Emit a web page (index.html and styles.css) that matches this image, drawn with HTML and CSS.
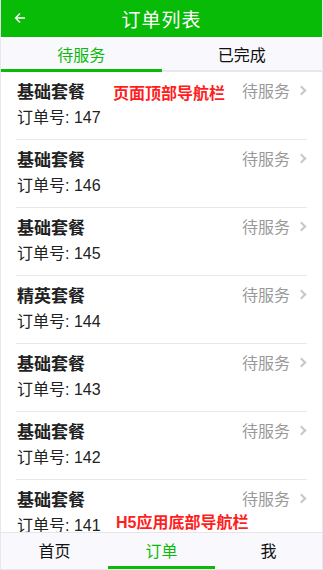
FILE: index.html
```html
<!DOCTYPE html>
<html lang="zh">
<head>
<meta charset="utf-8">
<title>订单列表</title>
<link rel="stylesheet" href="styles.css">
</head>
<body>
<div class="app">
  <header class="header">
    <span class="back">
      <svg width="12" height="12" viewBox="0 0 12 12"><path d="M11 6H1.5M6 1.5L1.5 6L6 10.5" fill="none" stroke="#fff" stroke-width="1.4"/></svg>
    </span>
    <h1 class="title">订单列表</h1>
  </header>
  <nav class="tabs">
    <div class="tab active">待服务</div>
    <div class="tab">已完成</div>
  </nav>
  <main class="list">
    <div class="item"><div class="inner"><div class="row"><span class="name">基础套餐</span><span class="status">待服务<span class="arrow"></span></span></div><div class="no">订单号: 147</div></div></div>
    <div class="item"><div class="inner"><div class="row"><span class="name">基础套餐</span><span class="status">待服务<span class="arrow"></span></span></div><div class="no">订单号: 146</div></div></div>
    <div class="item"><div class="inner"><div class="row"><span class="name">基础套餐</span><span class="status">待服务<span class="arrow"></span></span></div><div class="no">订单号: 145</div></div></div>
    <div class="item"><div class="inner"><div class="row"><span class="name">精英套餐</span><span class="status">待服务<span class="arrow"></span></span></div><div class="no">订单号: 144</div></div></div>
    <div class="item"><div class="inner"><div class="row"><span class="name">基础套餐</span><span class="status">待服务<span class="arrow"></span></span></div><div class="no">订单号: 143</div></div></div>
    <div class="item"><div class="inner"><div class="row"><span class="name">基础套餐</span><span class="status">待服务<span class="arrow"></span></span></div><div class="no">订单号: 142</div></div></div>
    <div class="item"><div class="inner"><div class="row"><span class="name">基础套餐</span><span class="status">待服务<span class="arrow"></span></span></div><div class="no">订单号: 141</div></div></div>
  </main>
  <footer class="bottom">
    <div class="nav">首页</div>
    <div class="nav active">订单</div>
    <div class="nav">我</div>
  </footer>
  <div class="note note-top">页面顶部导航栏</div>
  <div class="note note-bottom">H5应用底部导航栏</div>
</div>
</body>
</html>
```
FILE: styles.css
```css
* { box-sizing: border-box; }
html, body { margin: 0; padding: 0; }
body {
  font-family: "Liberation Sans", "Noto Sans CJK SC", sans-serif;
  background: #fff;
  color: #222;
}
.app {
  position: relative;
  width: 323px;
  height: 570px;
  display: flex;
  flex-direction: column;
  border-left: 1px solid #e8e8ec;
  border-right: 1px solid #e8e8ec;
  border-bottom: 1px solid #e8e8ec;
  overflow: hidden;
}
.header {
  height: 37px;
  flex: none;
  background: #07bb07;
  display: flex;
  align-items: center;
  justify-content: center;
  position: relative;
}
.back {
  position: absolute;
  left: 13px;
  top: 12px;
  width: 12px;
  height: 12px;
  display: flex;
}
.title {
  margin: 0;
  font-size: 19px;
  font-weight: normal;
  color: #fff;
  letter-spacing: 1px;
}
.tabs {
  height: 35px;
  flex: none;
  display: flex;
  background: #f9f8fd;
  border-bottom: 2px solid #e8e8ec;
}
.tab {
  flex: 1;
  display: flex;
  align-items: center;
  justify-content: center;
  font-size: 16px;
  color: #111;
  padding-top: 1px;
}
.tab.active {
  color: #09bb07;
  border-bottom: 3px solid #09bb07;
  margin-bottom: -2px;
}
.list {
  flex: 1;
  overflow: hidden;
}
.item {
  height: 68px;
  padding: 0 15px;
}
.inner {
  height: 68px;
  border-bottom: 1px solid #e8e8e8;
  padding-top: 7px;
}
.row {
  display: flex;
  justify-content: space-between;
  align-items: center;
  height: 22px;
}
.name {
  font-size: 17px;
  font-weight: bold;
  color: #222;
  padding-left: 1px;
}
.status {
  font-size: 16px;
  color: #999;
  display: flex;
  align-items: center;
}
.arrow {
  display: inline-block;
  width: 7px;
  height: 7px;
  border-top: 2px solid #c8c8cc;
  border-right: 2px solid #c8c8cc;
  transform: rotate(45deg);
  margin-left: 8px;
  margin-right: 2px;
}
.no {
  font-size: 16px;
  color: #222;
  margin-top: 3px;
  padding-left: 1px;
}
.bottom {
  height: 37px;
  flex: none;
  display: flex;
  background: #f9f8fd;
  border-top: 1px solid #e5e5ea;
}
.nav {
  flex: 1;
  display: flex;
  align-items: center;
  justify-content: center;
  font-size: 16px;
  color: #111;
  padding-bottom: 3px;
}
.nav.active {
  color: #09bb07;
  border-bottom: 3px solid #09bb07;
  padding-bottom: 0;
}
.note {
  position: absolute;
  color: #ff1e1e;
  font-weight: bold;
  font-size: 16px;
  white-space: nowrap;
}
.note-top { left: 112px; top: 80px; }
.note-bottom { left: 115px; top: 509px; }
```
